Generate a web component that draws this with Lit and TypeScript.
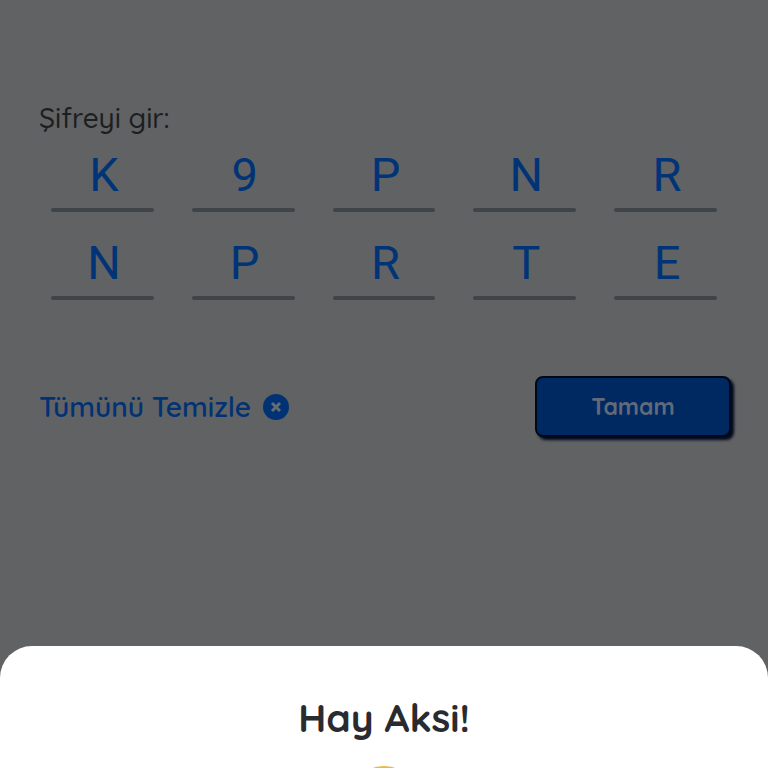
import { LitElement, html, css } from "lit";
import { customElement, state } from "lit/decorators.js";

@customElement("app-root")
export class AppRoot extends LitElement {
  @state() private code: string[] = [..."K9PNRNPRTE"];

  static styles = css`
    :host {
      display: block;
      box-sizing: border-box;
      min-height: 100vh;
      background: #606264;
      font-family: Quicksand, Lato, "Open Sans", sans-serif;
      color: #1c1e21;
    }
    main {
      padding: 100px 32px 0;
    }
    fieldset {
      margin: 0;
      padding: 0;
      border: 0;
      min-width: 0;
    }
    legend {
      padding: 0 7px;
      font-size: 28px;
      font-weight: 500;
      line-height: 36px;
    }
    .cells {
      display: grid;
      grid-template-columns: repeat(5, 1fr);
      row-gap: 12px;
    }
    .cell {
      box-sizing: border-box;
      display: flex;
      flex-direction: column;
      padding: 0 19px;
    }
    .digit {
      box-sizing: border-box;
      width: 100%;
      height: 72px;
      margin: 0;
      padding: 5px 0 0 3px;
      border: 0;
      outline: 0;
      background: none;
      text-align: center;
      font: 400 47px/67px Roboto, sans-serif;
      color: #003476;
    }
    .cell::after {
      content: "";
      height: 4px;
      border-radius: 2px;
      background: #3f4448;
    }
    .actions {
      display: flex;
      justify-content: space-between;
      align-items: center;
      padding: 76px 5px 0 7px;
    }
    button {
      font: 700 23px/32px Quicksand, Lato, "Open Sans", sans-serif;
      cursor: pointer;
    }
    .clear {
      display: flex;
      align-items: center;
      gap: 12px;
      padding: 0;
      border: 0;
      background: none;
      font-size: 28px;
      font-weight: 600;
      color: #003274;
    }
    .clear svg {
      width: 26px;
      height: 26px;
    }
    .ok {
      box-sizing: border-box;
      width: 196px;
      height: 61px;
      border: 2px solid #00081a;
      border-radius: 8px;
      background: #002961;
      box-shadow: 3px 3px 3px #00081a;
      color: #606a7a;
    }
    .sheet {
      position: fixed;
      left: 0;
      right: 0;
      top: calc(100vh - 122px);
      box-sizing: border-box;
      display: flex;
      flex-direction: column;
      align-items: center;
      gap: 24px;
      padding-top: 48px;
      border-radius: 32px 32px 0 0;
      background: #fff;
    }
    h2 {
      margin: 0;
      font-size: 39px;
      line-height: 48px;
      font-weight: 700;
      color: #292b2f;
    }
    .face {
      width: 76px;
      height: 76px;
    }
  `;

  private edit(i: number, e: Event) {
    const value = (e.target as HTMLInputElement).value;
    this.code = this.code.map((c, n) => (n === i ? value : c));
  }

  private clear() {
    this.code = this.code.map(() => "");
  }

  render() {
    return html`
      <main>
        <fieldset>
          <legend>Şifreyi gir:</legend>
          <div class="cells">
            ${this.code.map(
              (c, i) => html`<label class="cell">
                <input
                  class="digit"
                  type="text"
                  maxlength="1"
                  aria-label=${`${i + 1}. karakter`}
                  .value=${c}
                  @input=${(e: Event) => this.edit(i, e)}
                />
              </label>`
            )}
          </div>
        </fieldset>
        <div class="actions">
          <button class="clear" type="button" @click=${this.clear}>
            Tümünü Temizle
            <svg viewBox="0 0 26 26" aria-hidden="true">
              <circle cx="13" cy="13" r="13" fill="#003274" />
              <path d="M9 9l8 8M17 9l-8 8" stroke="#666c74" stroke-width="3" />
            </svg>
          </button>
          <button class="ok" type="button">Tamam</button>
        </div>
      </main>
      <section class="sheet" role="dialog" aria-labelledby="sheet-title">
        <h2 id="sheet-title">Hay Aksi!</h2>
        <svg class="face" viewBox="0 0 76 76" aria-hidden="true">
          <circle cx="38" cy="38" r="38" fill="#e9b93f" />
          <circle cx="25" cy="32" r="4" fill="#292b2f" />
          <circle cx="51" cy="32" r="4" fill="#292b2f" />
          <path d="M24 56q14-14 28 0" fill="none" stroke="#292b2f" stroke-width="4" stroke-linecap="round" />
        </svg>
      </section>
    `;
  }
}
